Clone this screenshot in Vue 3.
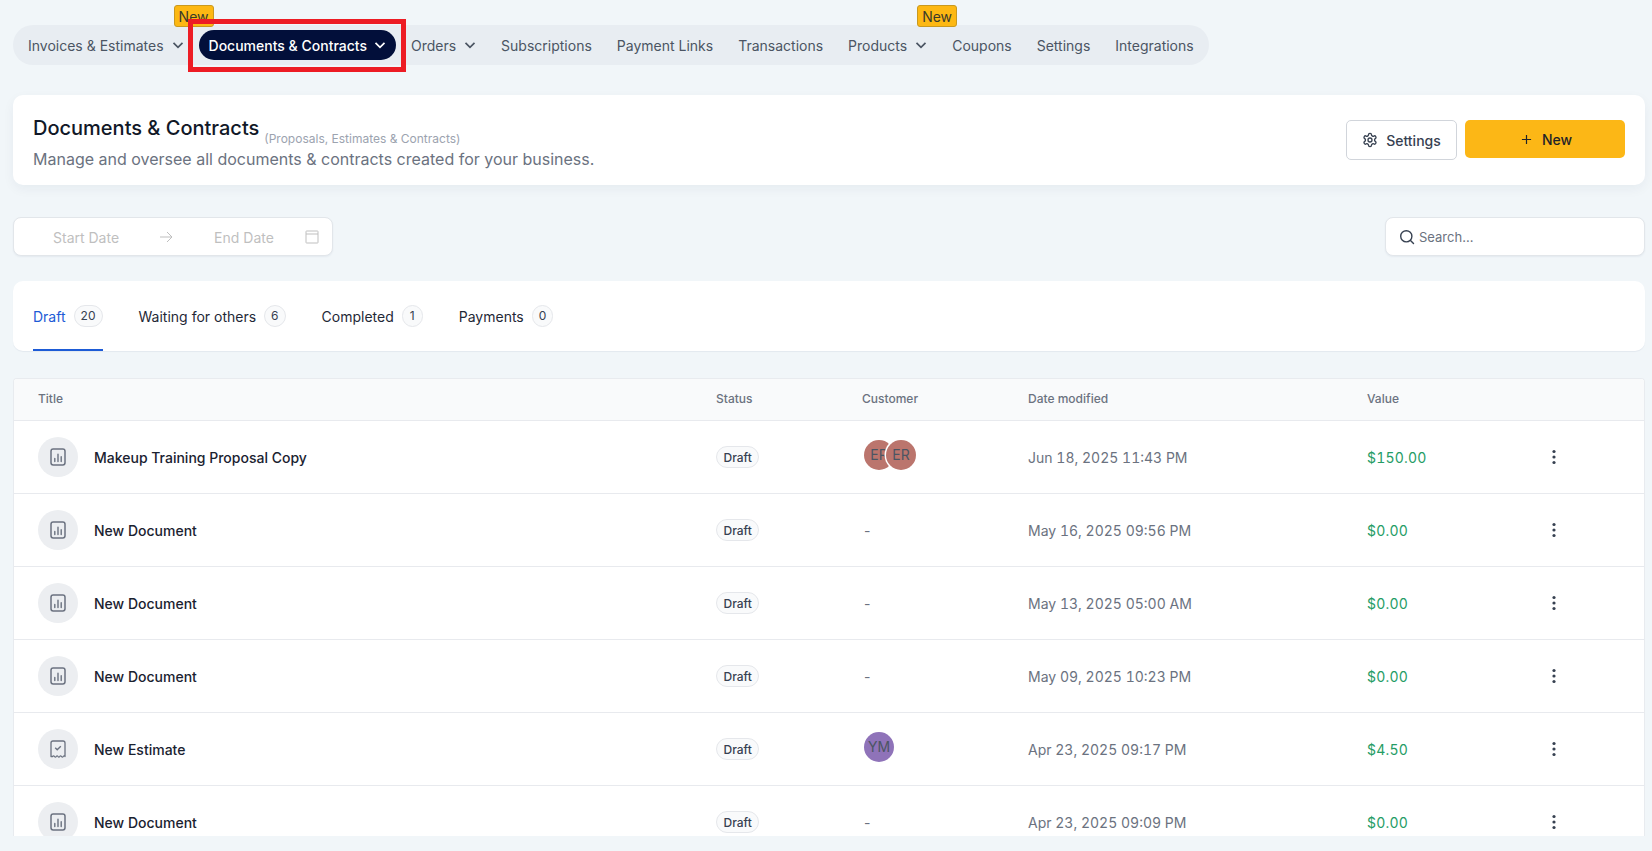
<template>
  <div class="page">
    <nav class="nav">
      <a
        v-for="item in navItems"
        :key="item.label"
        class="nav-item"
        :class="{ active: item.active }"
      >
        {{ item.label }}
        <svg v-if="item.caret" class="caret" viewBox="0 0 12 12" width="12" height="12">
          <path d="M1.5 3.8 6 8.3l4.5-4.5" fill="none" stroke="currentColor" stroke-width="1.7" />
        </svg>
        <span v-if="item.badge" class="new-badge" :class="item.badge">New</span>
        <span v-if="item.active" class="annotation"></span>
      </a>
    </nav>

    <section class="head-card">
      <div class="head-text">
        <div class="head-title">
          <h1>Documents &amp; Contracts</h1>
          <small>(Proposals, Estimates &amp; Contracts)</small>
        </div>
        <p>Manage and oversee all documents &amp; contracts created for your business.</p>
      </div>
      <div class="head-actions">
        <button class="settings-btn">
          <svg viewBox="0 0 24 24" width="16" height="16" fill="none" stroke="currentColor" stroke-width="2" stroke-linecap="round" stroke-linejoin="round">
            <path d="M12.22 2h-.44a2 2 0 0 0-2 2v.18a2 2 0 0 1-1 1.73l-.43.25a2 2 0 0 1-2 0l-.15-.08a2 2 0 0 0-2.73.73l-.22.38a2 2 0 0 0 .73 2.73l.15.1a2 2 0 0 1 1 1.72v.51a2 2 0 0 1-1 1.74l-.15.09a2 2 0 0 0-.73 2.73l.22.38a2 2 0 0 0 2.73.73l.15-.08a2 2 0 0 1 2 0l.43.25a2 2 0 0 1 1 1.73V20a2 2 0 0 0 2 2h.44a2 2 0 0 0 2-2v-.18a2 2 0 0 1 1-1.73l.43-.25a2 2 0 0 1 2 0l.15.08a2 2 0 0 0 2.73-.73l.22-.39a2 2 0 0 0-.73-2.73l-.15-.08a2 2 0 0 1-1-1.74v-.5a2 2 0 0 1 1-1.74l.15-.09a2 2 0 0 0 .73-2.73l-.22-.38a2 2 0 0 0-2.73-.73l-.15.08a2 2 0 0 1-2 0l-.43-.25a2 2 0 0 1-1-1.73V4a2 2 0 0 0-2-2z" />
            <circle cx="12" cy="12" r="3" />
          </svg>
          Settings
        </button>
        <button class="new-btn">
          <svg viewBox="0 0 12 12" width="11" height="11">
            <path d="M6 1v10M1 6h10" fill="none" stroke="currentColor" stroke-width="1.3" />
          </svg>
          New
        </button>
      </div>
    </section>

    <div class="filters">
      <div class="date-range">
        <span class="date-start">Start Date</span>
        <svg class="date-arrow" viewBox="0 0 14 14" width="14" height="14">
          <path d="M1 7h12M8 2l5 5-5 5" fill="none" stroke="currentColor" stroke-width="1" />
        </svg>
        <span class="date-end">End Date</span>
        <svg class="date-cal" viewBox="0 0 14 14" width="14" height="14">
          <path d="M1.5 1h11a.5.5 0 0 1 .5.5v11a.5.5 0 0 1-.5.5h-11a.5.5 0 0 1-.5-.5v-11a.5.5 0 0 1 .5-.5zM1 4h12" fill="none" stroke="currentColor" stroke-width="1" />
        </svg>
      </div>
      <div class="search">
        <svg viewBox="0 0 16 16" width="16" height="16">
          <circle cx="7.3" cy="7.3" r="5.6" fill="none" stroke="currentColor" stroke-width="1.4" />
          <path d="m11.5 11.5 3 3" fill="none" stroke="currentColor" stroke-width="1.4" stroke-linecap="round" />
        </svg>
        <span>Search...</span>
      </div>
    </div>

    <div class="tabs">
      <div v-for="tab in tabs" :key="tab.label" class="tab" :class="{ active: tab.active }">
        {{ tab.label }}
        <span class="count">{{ tab.count }}</span>
      </div>
    </div>

    <div class="table">
      <div class="row header">
        <div>Title</div>
        <div>Status</div>
        <div>Customer</div>
        <div>Date modified</div>
        <div>Value</div>
        <div></div>
      </div>
      <div v-for="(doc, i) in docs" :key="i" class="row">
        <div class="title-cell">
          <span class="doc-icon">
            <svg v-if="doc.type === 'doc'" viewBox="0 0 16 18" width="16" height="18" fill="none" stroke="currentColor">
              <rect x="1" y="1" width="14" height="16" rx="2.2" stroke-width="1.5" />
              <path d="M4.8 10.5V13.5M8 6.2V13.5M11.2 8.8V13.5" stroke-width="1.4" stroke-linecap="round" />
            </svg>
            <svg v-else viewBox="0 0 16 18" width="16" height="18" fill="none" stroke="currentColor">
              <path d="M1 16.5V3a2 2 0 0 1 2-2h10a2 2 0 0 1 2 2v13.5q-.9-1.3-1.75 0t-1.75 0q-.9-1.3-1.75 0t-1.75 0q-.9-1.3-1.75 0t-1.75 0q-.9-1.3-1.75 0z" stroke-width="1.3" stroke-linejoin="round" />
              <path d="m5.2 7.8 2 2 3.6-3.6" stroke-width="1.4" />
            </svg>
          </span>
          <span class="doc-name">{{ doc.title }}</span>
        </div>
        <div><span class="status">Draft</span></div>
        <div>
          <div v-if="doc.avatars" class="avatars">
            <span
              v-for="(a, j) in doc.avatars"
              :key="j"
              class="avatar"
              :style="{ background: doc.color }"
            >{{ a }}</span>
          </div>
          <span v-else class="dash">-</span>
        </div>
        <div class="date">{{ doc.date }}</div>
        <div class="value">{{ doc.value }}</div>
        <div class="more">
          <svg viewBox="0 0 4 16" width="4" height="16">
            <circle cx="2" cy="2.5" r="1.6" />
            <circle cx="2" cy="8" r="1.6" />
            <circle cx="2" cy="13.5" r="1.6" />
          </svg>
        </div>
      </div>
    </div>
  </div>
</template>

<script setup>
const navItems = [
  { label: 'Invoices & Estimates', caret: true },
  { label: 'Documents & Contracts', caret: true, active: true, badge: 'badge-docs' },
  { label: 'Orders', caret: true },
  { label: 'Subscriptions' },
  { label: 'Payment Links' },
  { label: 'Transactions' },
  { label: 'Products', caret: true, badge: 'badge-products' },
  { label: 'Coupons' },
  { label: 'Settings' },
  { label: 'Integrations' }
]

const tabs = [
  { label: 'Draft', count: 20, active: true },
  { label: 'Waiting for others', count: 6 },
  { label: 'Completed', count: 1 },
  { label: 'Payments', count: 0 }
]

const docs = [
  { type: 'doc', title: 'Makeup Training Proposal Copy', avatars: ['ER', 'ER'], color: '#bb756d', date: 'Jun 18, 2025 11:43 PM', value: '$150.00' },
  { type: 'doc', title: 'New Document', date: 'May 16, 2025 09:56 PM', value: '$0.00' },
  { type: 'doc', title: 'New Document', date: 'May 13, 2025 05:00 AM', value: '$0.00' },
  { type: 'doc', title: 'New Document', date: 'May 09, 2025 10:23 PM', value: '$0.00' },
  { type: 'receipt', title: 'New Estimate', avatars: ['YM'], color: '#8f73b9', date: 'Apr 23, 2025 09:17 PM', value: '$4.50' },
  { type: 'doc', title: 'New Document', date: 'Apr 23, 2025 09:09 PM', value: '$0.00' }
]
</script>

<style>
html,
body {
  margin: 0;
  background: #f1f6f9;
  overflow: hidden;
}
</style>

<style scoped>
.page {
  height: 851px;
  box-sizing: border-box;
  padding: 25px 7px 15px 13px;
  display: flex;
  flex-direction: column;
  font-family: Inter, "Noto Sans", sans-serif;
  font-size: 14px;
  color: #111827;
}

.nav {
  align-self: flex-start;
  display: flex;
  align-items: center;
  gap: 5px;
  height: 40px;
  padding: 0 5px;
  border-radius: 20px;
  background: #e8edf2;
}

.nav-item {
  position: relative;
  display: flex;
  align-items: center;
  gap: 8px;
  height: 30px;
  padding: 0 10px;
  border-radius: 15px;
  color: #4b5563;
  white-space: nowrap;
}

.nav-item.active {
  background: #020f3a;
  color: #fff;
  font-weight: 500;
  gap: 7px;
}

.caret {
  flex: none;
}

.new-badge {
  position: absolute;
  top: -25px;
  height: 22px;
  width: 40px;
  box-sizing: border-box;
  display: flex;
  align-items: center;
  justify-content: center;
  background: #fdb813;
  border: 1px solid #c9991f;
  border-radius: 3px;
  color: #3a3a2a;
  font-weight: 400;
  font-size: 14px;
}

.badge-docs {
  left: -25px;
}

.badge-products {
  left: 79px;
}

.annotation {
  position: absolute;
  left: -11px;
  right: -10px;
  top: -11px;
  bottom: -12px;
  border: 5px solid #ed1c24;
}

.head-card {
  margin-top: 30px;
  height: 90px;
  flex: none;
  box-sizing: border-box;
  padding: 0 20px;
  display: flex;
  align-items: center;
  justify-content: space-between;
  background: #fff;
  border-radius: 10px;
  box-shadow: 0 4px 12px rgba(15, 40, 80, 0.05);
}

.head-text {
  padding-top: 5px;
}

.head-title {
  display: flex;
  align-items: flex-end;
  gap: 5px;
}

.head-title h1 {
  margin: 0;
  font-size: 20px;
  line-height: 28px;
  font-weight: 500;
}

.head-title small {
  font-size: 12px;
  line-height: 20px;
  margin-bottom: -7px;
  color: #9ca3af;
}

.head-card p {
  margin: 5px 0 0;
  font-size: 16px;
  line-height: 24px;
  color: #6b7280;
}

.head-actions {
  display: flex;
  gap: 8px;
  align-items: flex-start;
}

.head-actions button {
  display: flex;
  align-items: center;
  justify-content: center;
  font-family: inherit;
  font-size: 14px;
  font-weight: 500;
  border-radius: 5px;
  padding: 0;
}

.settings-btn {
  width: 111px;
  height: 40px;
  gap: 8px;
  background: #fff;
  border: 1px solid #d1d5db;
  color: #374151;
}

.head-actions .new-btn {
  width: 160px;
  height: 38px;
  gap: 10px;
  padding-left: 3px;
  background: #fcb716;
  border: none;
  color: #1f2328;
}

.filters {
  margin-top: 32px;
  flex: none;
  display: flex;
  justify-content: space-between;
}

.date-range,
.search {
  height: 39px;
  box-sizing: border-box;
  padding-top: 1px;
  display: flex;
  align-items: center;
  background: #fff;
  border: 1px solid #e2e6ea;
  border-radius: 8px;
  box-shadow: 0 1px 2px rgba(15, 40, 80, 0.06);
}

.date-range {
  width: 320px;
  color: #bfbfbf;
  padding-left: 39px;
}

.date-arrow {
  margin-left: 40px;
}

.date-end {
  margin-left: 41px;
}

.date-cal {
  margin-left: 31px;
}

.search {
  width: 260px;
  padding-left: 13px;
  gap: 4px;
  font-size: 13px;
  color: #6b7280;
}

.search svg {
  color: #374151;
}

.tabs {
  margin-top: 25px;
  height: 70px;
  flex: none;
  box-sizing: border-box;
  padding: 0 20px;
  display: flex;
  gap: 36px;
  background: #fff;
  border-radius: 10px;
  box-shadow: 0 1px 1px rgba(15, 40, 80, 0.06);
}

.tab {
  display: flex;
  align-items: center;
  gap: 8px;
  height: 70px;
  box-sizing: border-box;
  color: #1f2937;
}

.tab.active {
  color: #1d5bd6;
  border-bottom: 2px solid #1d5bd6;
  padding-top: 2px;
}

.count {
  min-width: 21px;
  height: 22px;
  box-sizing: border-box;
  padding: 0 6px;
  display: flex;
  align-items: center;
  justify-content: center;
  background: #f9fafb;
  border: 1px solid #e5e7eb;
  border-radius: 11px;
  font-size: 12px;
  color: #374151;
  margin-top: -1px;
}

.tab.active .count {
  min-width: 29px;
}

.table {
  margin-top: 27px;
  flex: 1;
  min-height: 0;
  overflow: hidden;
  background: #fff;
  border: 1px solid #e8ebef;
  border-bottom: none;
  border-radius: 4px 4px 0 0;
}

.row {
  display: grid;
  grid-template-columns: 678px 146px 166px 339px 177px 20px;
  padding-left: 24px;
  align-items: center;
  height: 73px;
  box-sizing: border-box;
  border-bottom: 1px solid #e8eaee;
}

.row.header {
  height: 42px;
  padding-bottom: 2px;
  background: #f9fafb;
  font-size: 12px;
  font-weight: 500;
  color: #6b7280;
}

.title-cell {
  display: flex;
  align-items: center;
  gap: 16px;
}

.doc-icon {
  width: 40px;
  height: 40px;
  border-radius: 50%;
  background: #eceef1;
  color: #6b7280;
  display: flex;
  align-items: center;
  justify-content: center;
}

.doc-name {
  font-weight: 500;
  color: #1a2230;
}

.status {
  display: inline-flex;
  align-items: center;
  height: 22px;
  box-sizing: border-box;
  padding: 0 6.5px;
  background: #f9fafb;
  border: 1px solid #e5e7eb;
  border-radius: 11px;
  font-size: 12px;
  font-weight: 500;
  color: #374151;
}

.avatars {
  display: flex;
  padding-left: 2px;
  margin-top: -5px;
}

.avatar {
  width: 30px;
  height: 30px;
  border-radius: 50%;
  display: flex;
  align-items: center;
  justify-content: center;
  color: #4b5563;
}

.avatar + .avatar {
  margin-left: -8px;
  box-shadow: 0 0 0 1.5px #fff;
}

.dash {
  padding-left: 2px;
  color: #6b7280;
}

.date,
.value {
  font-variant-numeric: tabular-nums;
}

.date {
  color: #6b7280;
}

.value {
  color: #259c65;
  letter-spacing: 0.2px;
}

.more {
  display: flex;
  justify-content: center;
  fill: #374151;
}
</style>
